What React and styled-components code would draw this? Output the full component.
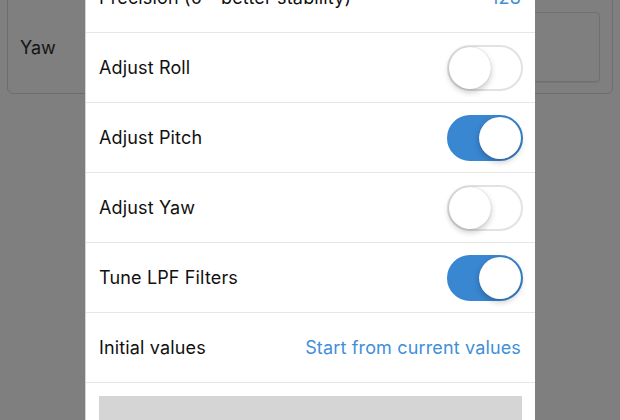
import React from 'react';
import styled, { createGlobalStyle } from 'styled-components';

const GlobalStyle = createGlobalStyle`
  html, body {
    margin: 0;
    padding: 0;
    background: #7f7f7f;
  }
  body {
    font-family: Inter, "Liberation Sans", Arial, sans-serif;
    -webkit-font-smoothing: antialiased;
  }
`;

const Screen = styled.div`
  position: relative;
  width: 620px;
  height: 420px;
  overflow: hidden;
  background: #7f7f7f;
`;

const BackCard = styled.section`
  margin: -40px 7px 0 7px;
  height: 134px;
  box-sizing: border-box;
  border: 1px solid #6d6d6d;
  border-radius: 6px;
  padding: 51px 12px 11px 12px;
  display: flex;
  align-items: stretch;
  gap: 20px;
`;

const BackLabel = styled.span`
  display: flex;
  align-items: center;
  width: 60px;
  font-size: 18px;
  color: #141414;
`;

const BackInput = styled.div`
  flex: 1;
  border: 1px solid #6f6f6f;
  border-radius: 4px;
  box-shadow: 0 1px 0 #767676;
`;

const Overlay = styled.div`
  position: absolute;
  top: 0;
  left: 85px;
  width: 450px;
  height: 420px;
  overflow: hidden;
  background: #fff;
  border-left: 1px solid #d4d4d4;
  box-sizing: border-box;
`;

const List = styled.div`
  margin-top: -37px;
  display: flex;
  flex-direction: column;
`;

const Row = styled.div`
  height: 69px;
  border-bottom: 1px solid #e6e6e6;
  display: flex;
  align-items: center;
  justify-content: space-between;
  padding: 0 12px 0 13px;
`;

const Label = styled.span`
  font-size: 18px;
  color: #111;
  letter-spacing: 0.15px;
`;

const Value = styled.span`
  font-size: 18px;
  color: #3f8fd8;
  margin-right: 2px;
  letter-spacing: 0.15px;
`;

const Track = styled.div`
  position: relative;
  width: 76px;
  height: 46px;
  box-sizing: border-box;
  border-radius: 23px;
  background: ${({ on }) => (on ? '#3986d1' : '#fff')};
  border: 2px solid ${({ on }) => (on ? '#3986d1' : '#e2e2e2')};
`;

const Knob = styled.div`
  position: absolute;
  top: 0;
  left: ${({ on }) => (on ? '30px' : '0')};
  width: 42px;
  height: 42px;
  border-radius: 50%;
  background: #fff;
  box-shadow: 0 3px 6px rgba(0, 0, 0, 0.22), 0 0 1px rgba(0, 0, 0, 0.25);
`;

const ButtonArea = styled.div`
  padding: 13px 13px 0 13px;
`;

const StartButton = styled.div`
  height: 60px;
  background: #d5d5d5;
`;

const Toggle = ({ on }) => (
  <Track on={on ? 1 : 0}>
    <Knob on={on ? 1 : 0} />
  </Track>
);

const toggles = [
  { label: 'Adjust Roll', on: false },
  { label: 'Adjust Pitch', on: true },
  { label: 'Adjust Yaw', on: false },
  { label: 'Tune LPF Filters', on: true },
];

const App = () => (
  <>
    <GlobalStyle />
    <Screen>
      <BackCard>
        <BackLabel>Yaw</BackLabel>
        <BackInput />
      </BackCard>
      <Overlay>
        <List>
          <Row>
            <Label>Precision (0 - better stability)</Label>
            <Value>128</Value>
          </Row>
          {toggles.map((t) => (
            <Row key={t.label}>
              <Label>{t.label}</Label>
              <Toggle on={t.on} />
            </Row>
          ))}
          <Row>
            <Label>Initial values</Label>
            <Value>Start from current values</Value>
          </Row>
        </List>
        <ButtonArea>
          <StartButton />
        </ButtonArea>
      </Overlay>
    </Screen>
  </>
);

export default App;
